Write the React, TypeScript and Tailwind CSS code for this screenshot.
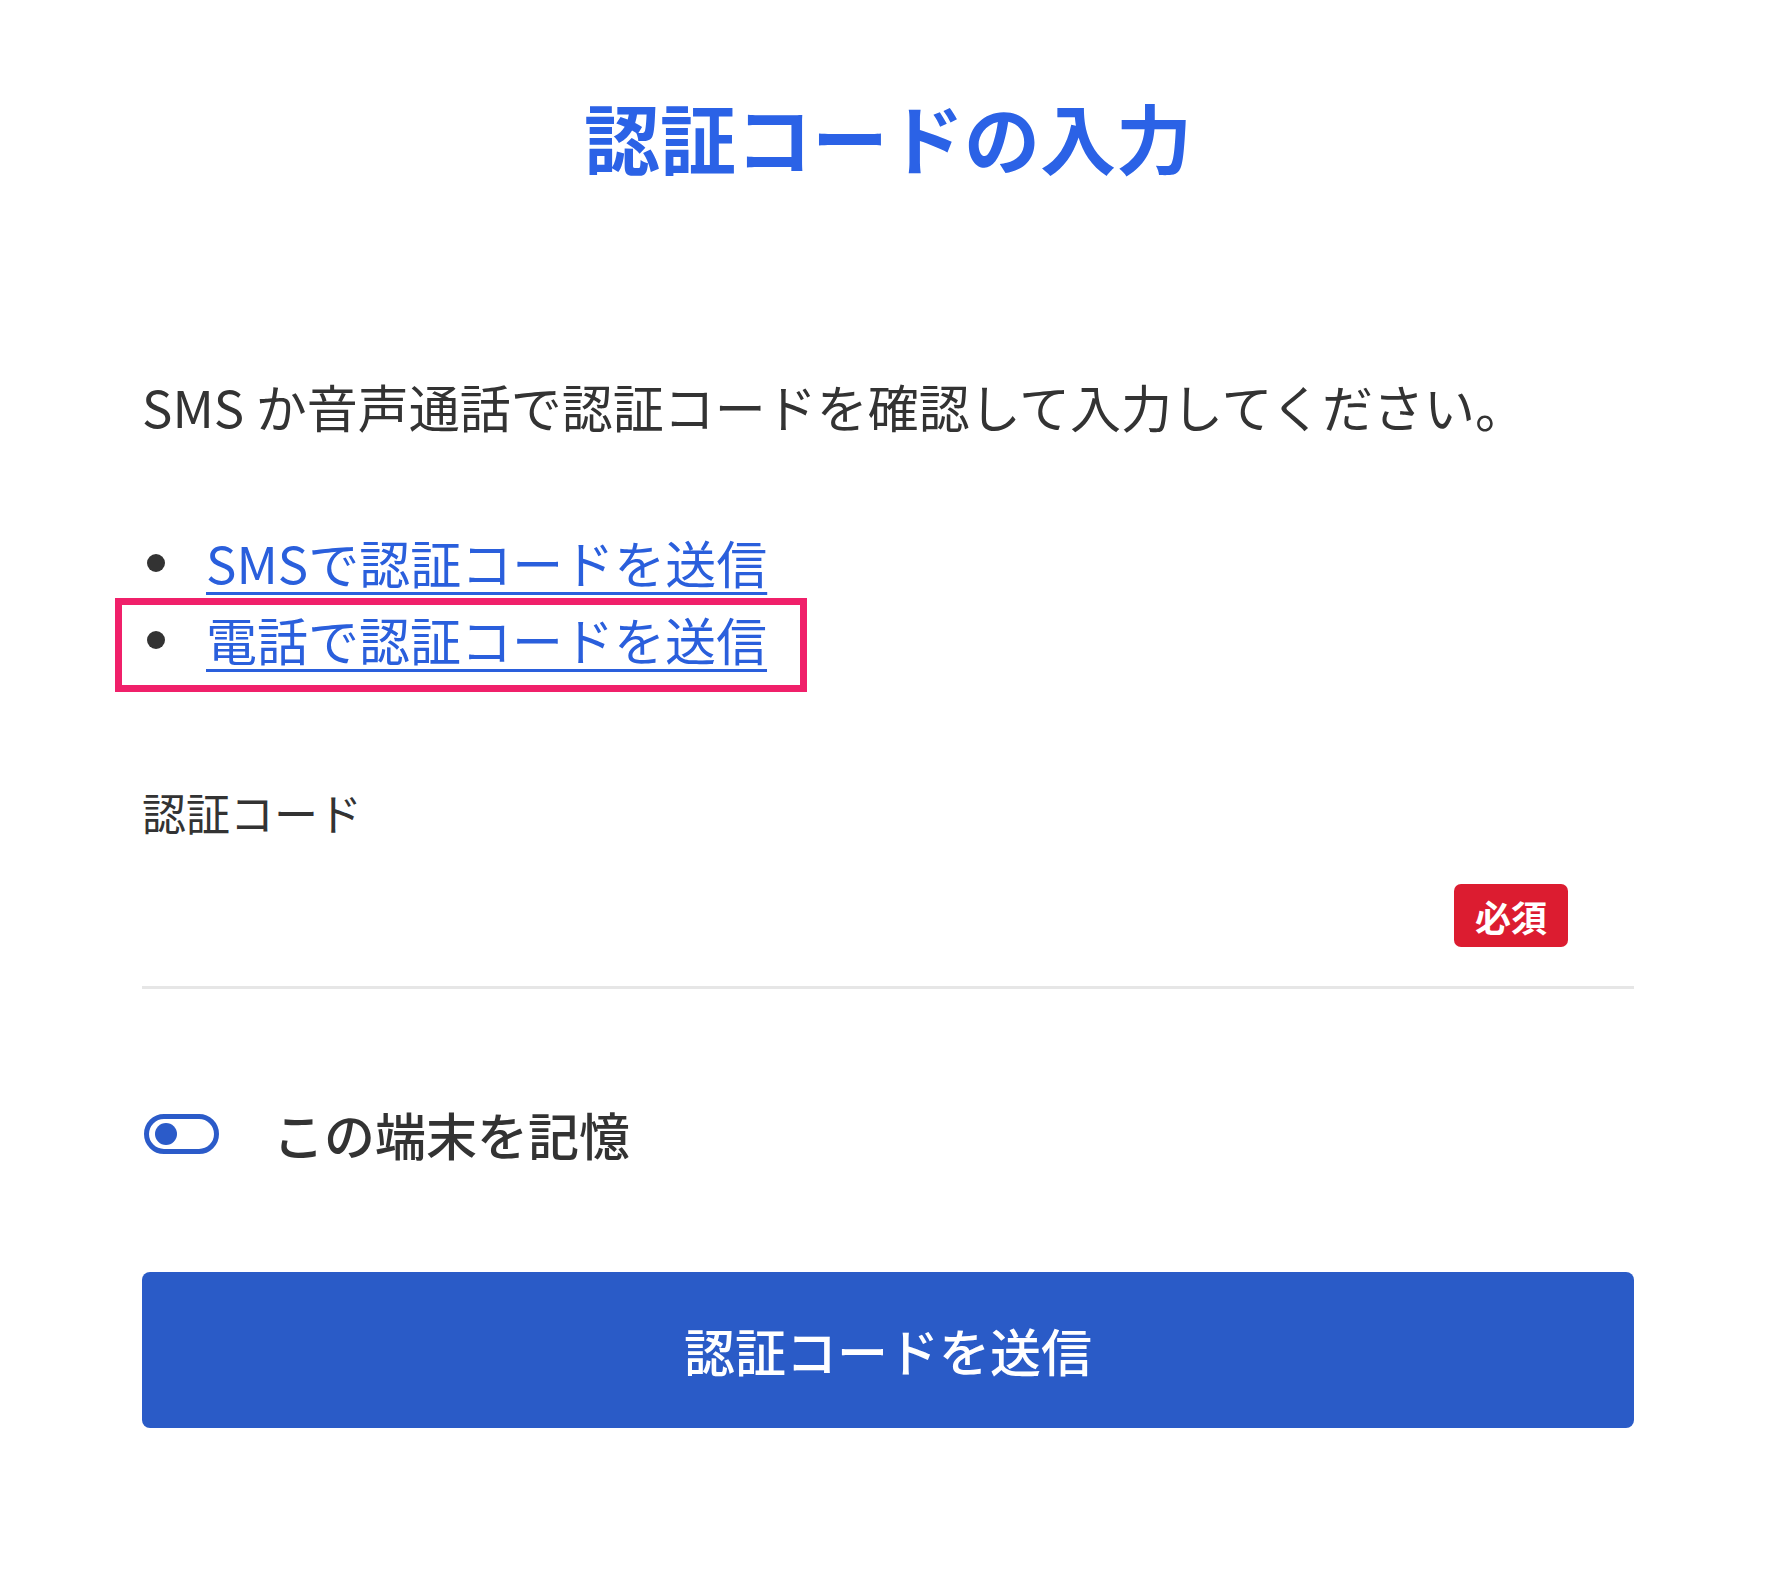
import React from "react";

const font = { fontFamily: '"Noto Sans CJK JP", "Noto Sans", sans-serif' };

export default function App() {
  return (
    <div className="w-[1776px] h-[1570px] bg-white text-[#333333]" style={font}>
      <div className="px-[142px] pt-[79px]">
        <h1 className="text-center text-[76px] leading-[114px] font-bold text-[#2b62e6]">
          認証コードの入力
        </h1>

        <p className="mt-[175px] text-[51px] leading-[76px] text-[#333333]">
          SMS か音声通話で認証コードを確認して入力してください。
        </p>

        <div className="relative mt-[80px]">
          <ul className="flex flex-col">
            <li className="flex items-center h-[77px]">
              <span className="ml-[5px] w-[18px] h-[18px] rounded-full bg-[#333333] shrink-0" />
              <a className="ml-[41px] text-[51px] leading-[77px] text-[#2a5fdc] underline decoration-[3px] underline-offset-[8px]">
                SMSで認証コードを送信
              </a>
            </li>
            <li className="flex items-center h-[77px]">
              <span className="ml-[5px] w-[18px] h-[18px] rounded-full bg-[#333333] shrink-0" />
              <a className="ml-[41px] text-[51px] leading-[77px] text-[#2a5fdc] underline decoration-[3px] underline-offset-[8px]">
                電話で認証コードを送信
              </a>
            </li>
          </ul>
          <div className="absolute left-[-27px] top-[74px] w-[692px] h-[94px] border-[7px] border-[#f0206a]" />
        </div>

        <div className="mt-[101px] text-[44px] leading-[66px] text-[#333333]">認証コード</div>

        <div className="h-[144px] border-b-[3px] border-[#e6e6e6] flex items-center justify-end pr-[66px]">
          <span className="w-[114px] h-[63px] rounded-[7px] bg-[#dc1c30] text-white text-[36px] font-bold flex items-center justify-center leading-none">
            必須
          </span>
        </div>

        <div className="mt-[107px] flex items-center h-[76px]">
          <span className="ml-[2px] w-[75px] h-[40px] rounded-full border-[5px] border-[#2b5bc9] flex items-center pl-[6px] shrink-0">
            <span className="w-[22px] h-[22px] rounded-full bg-[#2b5bc9]" />
          </span>
          <span className="ml-[54px] text-[51px] leading-[76px] font-medium text-[#333333]">この端末を記憶</span>
        </div>

        <button className="mt-[100px] w-full h-[156px] rounded-[8px] bg-[#2a5bc7] text-white text-[51px] font-medium flex items-center justify-center">
          認証コードを送信
        </button>
      </div>
    </div>
  );
}
